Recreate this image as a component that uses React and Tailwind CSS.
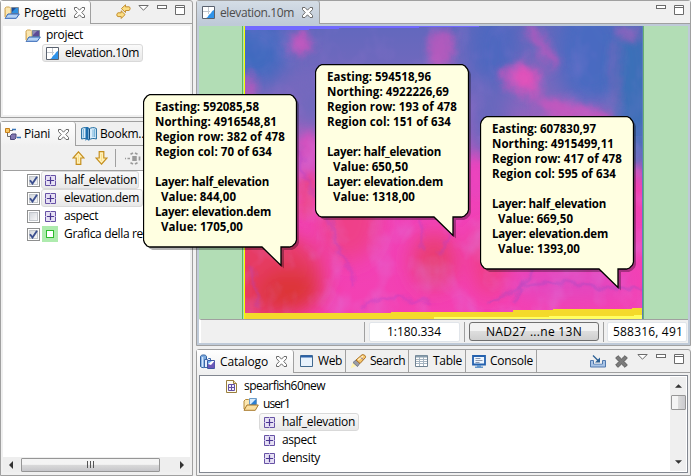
import { useLayoutEffect, useRef, useState } from "react";

/* Text whose tracking is adjusted so that the run takes exactly w pixels. */
function T({ w, children, className = "" }) {
  const ref = useRef(null);
  const [gap, setGap] = useState(0);
  useLayoutEffect(() => {
    const el = ref.current;
    const natural = el.getBoundingClientRect().width;
    const n = el.textContent.length;
    if (n > 0) setGap((w - natural) / n);
  }, [w]);
  return (
    <span
      ref={ref}
      className={"block w-max shrink-0 whitespace-pre " + className}
      style={{ letterSpacing: gap + "px" }}
    >
      {children}
    </span>
  );
}

function Close({ className = "" }) {
  return (
    <svg viewBox="0 0 11 11" className={"h-[11px] w-[11px] shrink-0 " + className}>
      <path
        d="M.5.5H3L5.500 3.200 8 .5h2.500v2L7.800 5.500l2.700 3v2H8L5.500 7.800 3 10.500H.5v-2l2.700-3L.5 2.500z"
        fill="#fff"
        stroke="#6b6b6b"
        strokeWidth="1"
      />
    </svg>
  );
}

function Triangle() {
  return (
    <svg viewBox="0 0 11 6" className="mt-1 h-[6px] w-[11px] shrink-0">
      <path d="M.8.5h9.400L5.500 5.200z" fill="#fff" stroke="#6b6b6b" />
    </svg>
  );
}

function MinMax() {
  return (
    <div className="flex gap-2">
      <div className="mt-1 h-1 w-[10px] border border-[#6b6b6b] bg-white" />
      <svg viewBox="0 0 10 10" className="mt-1 h-[10px] w-[10px] shrink-0">
        <path d="M.5.5h9v9h-9zM.5 2.500h9" fill="#fff" stroke="#6b6b6b" />
      </svg>
    </div>
  );
}

function ProjectIcon({ dark = false }) {
  return (
    <svg viewBox="0 0 16 13" className="h-[13px] w-4 shrink-0">
      <path d="M1 11V2l1.500-1h3L7 2.500V10z" fill="#fae6b0" stroke="#cfa656" />
      <path d="M7.500 1.500h7v6h-7z" fill={dark ? "#5b4a94" : "#2f8fdf"} stroke="#7b8798" />
      <path d="M8 2h4L8 6z" fill={dark ? "#8f86b4" : "#1c4c94"} />
      <path d="M1 12.300 4 8h11.300l-3 4.300z" fill="#b4d2f5" stroke="#2d62b4" />
      <path d="M1.500 11.500V4" stroke="#e0b96c" />
    </svg>
  );
}

function MapIcon() {
  return (
    <svg viewBox="0 0 13 13" className="h-[13px] w-[13px] shrink-0">
      <path d="M.5.5h12v12H.5z" fill="#fff" stroke="#59616e" />
      <path d="M1 5.500h7M6.500 1v7" stroke="#c3c8cf" />
      <path d="M4 12c2 0 2-3 4-4s1-3 4-4v8z" fill="#2f93ea" />
    </svg>
  );
}

function Grid() {
  return (
    <svg viewBox="0 0 11 11" className="h-[11px] w-[11px] shrink-0">
      <path d="M.5.5h10v10H.5z" fill="#e6e0f4" stroke="#6752a5" />
      <path d="M5.500 2v7M2 5.500h7" stroke="#4a3692" strokeWidth="1.200" />
      <path d="M5.500 0v1.500M5.500 9.500V11M0 5.500h1.500M9.500 5.500H11" stroke="#b3a6da" />
    </svg>
  );
}

function LinkIcon() {
  return (
    <svg viewBox="0 0 15 15" className="mt-[3px] h-[15px] w-[15px] shrink-0">
      <path d="M5.500 4.500 9.500.8v2H13c1.500 0 1.500 3.200 0 3.700H9.500v2L5.500 4.700z" fill="#fbdd83" stroke="#bd8420" strokeWidth=".9" />
      <path d="M9 10.500 5.200 6.800v2H2C.4 9.300.4 12.500 2 12.600h3.200v1.900L9 10.700z" fill="#fbdd83" stroke="#bd8420" strokeWidth=".9" />
    </svg>
  );
}

function LayersIcon() {
  return (
    <svg viewBox="0 0 16 12" className="h-3 w-4 shrink-0">
      <path d="M2.500 5v3.500H5M5 2.500h3" fill="none" stroke="#6b6b6b" />
      <path d="M.5.5h4v4h-4z" fill="#f8c866" stroke="#c57f1c" />
      <path d="M7 1.500h4M12 9.500h4" stroke="#3774b8" strokeWidth="1.500" />
      <path d="M5.500 7.500 7 6h4v4l-1.500 1.500h-4z" fill="#8177b0" stroke="#4b4678" />
    </svg>
  );
}

function BookIcon() {
  return (
    <svg viewBox="0 0 16 16" className="h-4 w-4 shrink-0">
      <path d="M.6 2.500C3 1 6 1.500 8 3c2-1.500 5-2 7.400-.5V13C12 12 10 12.500 8 14c-2-1.500-4-2-7.400-1z" fill="#d8ecfa" stroke="#1f6a9e" />
      <path d="M2.500 3v8.500M12 3.500V11M13.500 3v8" stroke="#7cb7dc" />
      <path d="M4.500 1h3v14L6 13l-1.500 2z" fill="#1d6fae" />
      <path d="M8.500 3v10" stroke="#174c7a" />
    </svg>
  );
}

function Arrow({ down = false }) {
  return (
    <svg viewBox="0 0 13 14" className={"h-[14px] w-[13px] shrink-0 " + (down ? "rotate-180" : "")}>
      <path d="M6.500.8 12 7H8.800v6.300H4.200V7H1z" fill="#fff0b8" stroke="#c58f1e" strokeWidth="1.200" />
      <path d="M6 4h1v7H6z" fill="#fbe08a" />
    </svg>
  );
}

function TargetIcon() {
  return (
    <svg viewBox="0 0 16 13" className="h-[13px] w-4 shrink-0">
      <path d="M5.500 2.200 8 .9M10 .9l2.500 1.300M5.500 10.800 8 12.100M10 12.100l2.500-1.300M14.500 4.500v4" stroke="#9a9a9a" strokeWidth="1.700" fill="none" />
      <path d="M0 6.500h1M2.500 6.500H5M8 4.800h3v3.400H8z" stroke="#9a9a9a" strokeWidth="1.500" fill="#9a9a9a" />
    </svg>
  );
}

function Check({ on }) {
  return (
    <div className="flex h-[13px] w-[13px] shrink-0 items-center justify-center border border-[#8e8f8f] bg-white">
      <div className="flex h-[9px] w-[9px] items-center justify-center border border-[#c3c7cc] bg-gradient-to-br from-[#d3d7dc] to-[#f8f8f8]">
        {on && (
          <svg viewBox="0 0 9 9" className="h-[9px] w-[9px] shrink-0">
            <path d="M1 4.200 3.500 7.500 8 .8" fill="none" stroke="#3c4f8f" strokeWidth="1.900" />
          </svg>
        )}
      </div>
    </div>
  );
}

function CatalogIcon() {
  return (
    <svg viewBox="0 0 16 16" className="h-4 w-4 shrink-0">
      <path d="M.5 2.500C1 .4 6 .4 6.500 2.500v10c-.5 1.500-5.500 1.500-6 0z" fill="#7aa8dd" stroke="#315f9e" />
      <path d="M2.500 3v10" stroke="#d4e6fa" strokeWidth="1.500" />
      <path d="M4.500 5.500h3l1-1h2v9h-6z" fill="#e7eefa" stroke="#3b67a8" />
      <path d="M7.500 6.500h7v8h-7z" fill="#fff" stroke="#3b57a3" />
      <path d="M8 14v-4l3 1 3.500-4v7z" fill="#6b58b8" />
      <path d="M8 7h4l-4 3z" fill="#6fb0ee" />
    </svg>
  );
}

function WebIcon() {
  return (
    <svg viewBox="0 0 13 12" className="h-3 w-[13px] shrink-0">
      <path d="M.5.5h12v11H.5z" fill="#e8f2fc" stroke="#41698f" />
      <path d="M1 1.500h11" stroke="#2a61a8" strokeWidth="2" />
    </svg>
  );
}

function SearchIcon() {
  return (
    <svg viewBox="0 0 17 15" className="h-[15px] w-[17px] shrink-0">
      <path d="M.5 14.500 3 8l4 3.500z" fill="#fff3b0" />
      <path d="M3 8.500 6 6l4 3-2.500 3.500z" fill="#9b9da6" stroke="#767a88" />
      <path d="M6 6 12 .8c2-.7 4 1 3.500 2.700L10 9.500z" fill="#f6c66b" stroke="#a86f25" />
      <path d="M8 6 13 2" stroke="#fff1c7" strokeWidth="1.500" />
      <path d="M11 3.500l2 2" stroke="#6d5cab" />
    </svg>
  );
}

function TableIcon() {
  return (
    <svg viewBox="0 0 13 12" className="h-3 w-[13px] shrink-0">
      <path d="M.5.5h12v11H.5z" fill="#fff" stroke="#718393" />
      <path d="M1 1.500h11" stroke="#879cac" strokeWidth="2" />
      <path d="M1 4.500h11M1 6.500h11M1 8.500h11M4.500 2v9M8.500 2v9" stroke="#a5b4c1" />
    </svg>
  );
}

function ConsoleIcon() {
  return (
    <svg viewBox="0 0 14 13" className="h-[13px] w-[14px] shrink-0">
      <path d="M1 1h12v8.500H1z" fill="#edf6ff" stroke="#2461ae" strokeWidth="1.800" />
      <path d="M3.500 3.500h5M3.500 5.500h7M3.500 7.500h4" stroke="#6e7d98" strokeWidth=".8" />
      <path d="M5 10h4v1.500h2V13H3v-1.500h2z" fill="#6396cb" />
    </svg>
  );
}

function ImportIcon() {
  return (
    <svg viewBox="0 0 16 13" className="mt-[5px] h-[13px] w-4 shrink-0">
      <path d="M3.500 5.500h-3v6.500h15V5.500h-3v3.500h-9z" fill="#a9c4e6" stroke="#5079ae" />
      <path d="M4 6h8v2.500H4z" fill="#f0f0f0" />
      <path d="M3 .5l5.500 5.500" fill="none" stroke="#2b5f93" strokeWidth="1.200" />
      <path d="M10 2.500v5H5z" fill="#2b5f93" />
    </svg>
  );
}

function DeleteIcon() {
  return (
    <svg viewBox="0 0 13 13" className="mt-[5px] h-[13px] w-[13px] shrink-0">
      <path d="M3 .7 6.500 4 10 .7 12.300 3 9 6.500l3.300 3.500L10 12.300 6.500 9 3 12.300.7 10 4 6.500.7 3z" fill="#7b7b7b" stroke="#5d5d5d" />
    </svg>
  );
}

function DatabaseIcon() {
  return (
    <svg viewBox="0 0 11 13" className="h-[13px] w-[11px] shrink-0">
      <path d="M.5.5h7l3 3v9H.5z" fill="#fffdf2" stroke="#9a7f3d" />
      <path d="M7.500.5v3h3" fill="#eeddb0" stroke="#9a7f3d" />
      <path d="M2.500 4.500h6v6h-6zM5.500 4.500v6M2.500 7.500h6" fill="#f0ecfb" stroke="#6250a4" />
    </svg>
  );
}

function FolderIcon() {
  return (
    <svg viewBox="0 0 16 13" className="h-[13px] w-4 shrink-0">
      <path d="M1 11V3l1.500-1.500h3L7 3v7z" fill="#fbe7b1" stroke="#b58a3a" />
      <path d="M6.500.5h7v6h-7z" fill="#d8ebfb" stroke="#6d9cc8" />
      <path d="M7 7l6-6v6z" fill="#2c7fd2" />
      <path d="M1 12.300 4 7h11.300l-3 5.300z" fill="#fbdf9f" stroke="#a8792b" />
    </svg>
  );
}

const picked = "rounded-[3px] border border-[#d9d9d9] bg-gradient-to-b from-[#fafafa] to-[#e8e8e8]";

function LayerRow({ on, selected, label, w, green, boxClass }) {
  return (
    <div className="flex h-[18px] items-center pl-6">
      <Check on={on} />
      <div className={"ml-px flex h-[18px] items-center " + boxClass + " " + (selected ? picked : "border border-transparent")}>
        {green ? (
          <div className="flex h-4 w-4 shrink-0 items-center justify-center bg-[#aeebae]">
            <div className="h-2 w-2 border border-[#2cbb2c] bg-white" />
          </div>
        ) : (
          <div className="flex w-4 shrink-0 justify-center"><Grid /></div>
        )}
        <T w={w} className="ml-[6px]">{label}</T>
      </div>
    </div>
  );
}

function CatalogRow({ label, w, selected }) {
  return (
    <div className="flex h-[18px] pl-[59px]">
      <div className={"flex h-[18px] items-center pl-1 pr-[3px] " + (selected ? picked : "border border-transparent")}>
        <Grid />
        <T w={w} className="ml-[7px]">{label}</T>
      </div>
    </div>
  );
}

function ElevationMap() {
  return (
    <svg viewBox="0 0 399 293" preserveAspectRatio="none" className="h-[293px] w-[399px] shrink-0">
      <defs>
        <linearGradient id="terrain" x1="0" y1="0" x2="0" y2="1">
          <stop offset="0" stopColor="#6268bd" />
          <stop offset=".22" stopColor="#7868be" />
          <stop offset=".36" stopColor="#a060c0" />
          <stop offset=".48" stopColor="#cf4fc0" />
          <stop offset=".6" stopColor="#f042b8" />
          <stop offset="1" stopColor="#f440b2" />
        </linearGradient>
        <filter id="soft" x="-50%" y="-50%" width="200%" height="200%"><feGaussianBlur stdDeviation="10" /></filter>
        <filter id="mid" x="-20%" y="-20%" width="140%" height="140%">
          <feGaussianBlur stdDeviation="5" result="b" />
          <feTurbulence type="fractalNoise" baseFrequency=".05" numOctaves="3" seed="4" result="n" />
          <feDisplacementMap in="b" in2="n" scale="14" xChannelSelector="R" yChannelSelector="G" />
        </filter>
        <filter id="fine" x="-20%" y="-20%" width="140%" height="140%">
          <feGaussianBlur stdDeviation="1.500" result="b" />
          <feTurbulence type="fractalNoise" baseFrequency=".08" numOctaves="2" seed="2" result="n" />
          <feDisplacementMap in="b" in2="n" scale="12" xChannelSelector="R" yChannelSelector="G" />
        </filter>
        <filter id="relief" x="0" y="0" width="100%" height="100%">
          <feTurbulence type="fractalNoise" baseFrequency=".04 .03" numOctaves="3" seed="8" />
          <feColorMatrix values="0 0 0 0 .68  0 0 0 0 .24  0 0 0 0 .8  2 0 0 0 -.9" />
        </filter>
      </defs>
      <rect width="399" height="293" fill="url(#terrain)" />
      <g filter="url(#soft)">
        <ellipse cx="10" cy="25" rx="34" ry="34" fill="#3f6abf" />
        <ellipse cx="250" cy="25" rx="24" ry="45" fill="#4d68c0" />
        <ellipse cx="345" cy="25" rx="32" ry="55" fill="#4a6ac1" />
        <ellipse cx="390" cy="65" rx="22" ry="85" fill="#3b70b8" />
        <ellipse cx="245" cy="92" rx="20" ry="40" fill="#6867bd" />
        <ellipse cx="85" cy="80" rx="40" ry="22" fill="#7069bd" />
        <ellipse cx="20" cy="250" rx="60" ry="45" fill="#e63b63" />
        <ellipse cx="45" cy="265" rx="32" ry="22" fill="#dd3538" />
        <ellipse cx="105" cy="190" rx="30" ry="45" fill="#ef4089" />
        <ellipse cx="190" cy="235" rx="22" ry="28" fill="#e93e72" />
        <ellipse cx="245" cy="235" rx="18" ry="35" fill="#f03c86" />
        <ellipse cx="325" cy="256" rx="60" ry="18" fill="#e346bf" />
      </g>
      <g filter="url(#mid)" fill="#d953bd">
        <ellipse cx="57" cy="17" rx="13" ry="13" opacity=".75" />
        <ellipse cx="197" cy="24" rx="12" ry="20" opacity=".65" />
        <ellipse cx="278" cy="52" rx="20" ry="18" opacity=".7" />
        <ellipse cx="280" cy="52" rx="10" ry="10" fill="#e44fb8" />
        <path d="M278 0l12 0 25 35-7 10-15-25zM285 67l45 8 38 13-5 12-55-4z" opacity=".7" />
        <path d="M370 0l12 15 15-6v-9z" opacity=".5" />
        <path d="M368 15h7v65h-7z" opacity=".3" />
        <ellipse cx="392" cy="168" rx="8" ry="28" fill="#f23fb1" />
        <ellipse cx="65" cy="130" rx="10" ry="25" fill="#d651bf" />
        <ellipse cx="235" cy="150" rx="8" ry="20" fill="#ee43bd" />
        <ellipse cx="3" cy="62" rx="10" ry="12" opacity=".6" />
        <ellipse cx="62" cy="170" rx="6" ry="25" fill="#ee427b" />
      </g>
      <rect y="110" width="399" height="183" filter="url(#relief)" opacity=".38" />
      <rect width="399" height="110" filter="url(#relief)" opacity=".15" />
      <g filter="url(#fine)" fill="none" stroke="#a93fcb" strokeWidth="2.200" opacity=".5">
        <path d="M54 124c10 12 0 20 12 38s20 26 24 48 25 30 18 50" />
        <path d="M176 195c5 8 5 20 2 30M208 205c-10 10-2 16-15 24" />
        <path d="M398 262c-45 3-75-9-105-5-20 3-28 8-48 20M270 278l8-20 19-20" stroke="#8c49c6" />
        <path d="M120 281c15-15 42-8 70-3" />
        <path d="M5 240c10 10 0 25 12 40" />
      </g>
      <path d="M0 0h235v1h-60v1H95v1H65v1H0z" fill="#7169ff" />
      <path d="M0 287h147v-1h122v-2h40v-1h79v-1h11v11H0z" fill="#f4da2b" />
      <path d="M190 291h115v-1h85v-1h9v4H190z" fill="#ffff62" />
      <path d="M.5 0v293" stroke="#f2ff00" />
      <path d="M398.500 0v293" stroke="#5b7fb8" />
    </svg>
  );
}

/* Speech balloon floating over the workbench. */
function Balloon({ className, lines }) {
  return (
    <div className={"absolute h-[176px] w-[158px] " + className}>
      <svg viewBox="0 0 158 176" className="absolute inset-0 h-[176px] w-[158px]">
        <path
          d="M7 .5h140l3 1.500 2.500 3 1 3v138l-1 3-3 3-3 1.500h-8v18.500l-19-18.500H7l-3-1.500-2.500-3-1-3V8l1-3L4 2z"
          fill="#000" opacity=".3" transform="translate(2.500 2.500)"
        />
        <path
          d="M7 .5h140l3 1.500 2.500 3 1 3v138l-1 3-3 3-3 1h-8.500v18.500l-19-18.500H7l-3-1-2.500-3-1-3V8l1-3L4 2z"
          fill="#ffffe1" stroke="#000" strokeWidth="1.300"
        />
      </svg>
      <div className="relative flex flex-col pl-3 pt-[5px] text-[11.5px] font-bold leading-[15px] text-black">
        {lines.map(([text, w], i) =>
          text ? (
            <T key={i} w={w} className={text.startsWith("Value") ? "ml-[6px]" : ""}>{text}</T>
          ) : (
            <div key={i} className="h-[15px]" />
          )
        )}
      </div>
    </div>
  );
}

export default function App() {
  return (
    <div className="relative flex h-[476px] w-[691px] gap-[3px] overflow-hidden bg-[#f0f0f0] font-['Open_Sans','Noto_Sans',sans-serif] text-[12px] leading-[16px] text-black">
      {/* left column */}
      <div className="flex w-[193px] shrink-0 flex-col gap-[3px]">
        <div className="flex h-[118px] flex-col rounded-t-[3px] border border-[#a0a0a0]">
          <div className="flex h-[23px] shrink-0">
            <div className="flex w-[90px] shrink-0 items-center rounded-tr-[3px] border-r border-[#a0a0a0] bg-gradient-to-b from-white to-[#f0f0f0] pl-[3px]">
              <ProjectIcon />
              <T w={42} className="ml-1">Progetti</T>
              <Close className="ml-2" />
            </div>
            <div className="flex flex-1 border-b border-[#a0a0a0] pl-[25px]">
              <LinkIcon />
              <div className="ml-[7px] flex gap-2">
                <Triangle />
                <MinMax />
              </div>
            </div>
          </div>
          <div className="mx-[2px] mb-[2px] mt-[2px] flex-1 bg-white">
            <div className="flex h-[18px] items-center pl-[22px]">
              <ProjectIcon dark />
              <T w={37} className="ml-[5px]">project</T>
            </div>
            <div className="flex pl-[39px]">
              <div className={"flex h-[18px] w-[101px] items-center pl-[3px] " + picked}>
                <MapIcon />
                <T w={74} className="ml-[6px]">elevation.10m</T>
              </div>
            </div>
          </div>
        </div>

        <div className="flex h-[355px] flex-col rounded-t-[3px] border border-[#a0a0a0]">
          <div className="flex h-[24px] shrink-0">
            <div className="flex w-[75px] shrink-0 items-center rounded-tr-[3px] border-r border-[#a0a0a0] bg-gradient-to-b from-white to-[#f0f0f0] pl-1">
              <LayersIcon />
              <T w={26} className="ml-[3px]">Piani</T>
              <Close className="ml-2" />
            </div>
            <div className="flex flex-1 items-center border-b border-[#a0a0a0] pl-[5px]">
              <BookIcon />
              <T w={47} className="ml-[3px]">Bookm...</T>
            </div>
          </div>
          <div className="flex h-[24px] shrink-0 items-center pl-[71px]">
            <Arrow />
            <div className="ml-[10px] flex"><Arrow down /></div>
            <div className="ml-[7px] h-[18px] w-px bg-[#a0a0a0]" />
            <div className="ml-[9px]"><TargetIcon /></div>
          </div>
          <div className="mx-[2px] flex flex-1 flex-col border-t border-[#a0a0a0] bg-white">
            <LayerRow on selected label="half_elevation" w={73} boxClass="w-[98px]" />
            <LayerRow on selected label="elevation.dem" w={75} boxClass="w-[102px]" />
            <LayerRow label="aspect" w={34} boxClass="w-[101px]" />
            <LayerRow on green label="Grafica della re" w={79} boxClass="w-[136px]" />
          </div>
          <div className="mx-[2px] mb-[3px] flex h-[15px] shrink-0 items-center bg-[#eeeeee]">
            <svg viewBox="0 0 4 8" className="ml-[6px] h-2 w-1"><path d="M4 0v8L0 4z" fill="#333" /></svg>
            <div className="ml-2 flex h-[14px] w-[139px] items-center justify-center gap-[2px] rounded-[1px] border border-[#969696] bg-gradient-to-b from-[#f4f4f4] from-45% via-[#dadada] via-50% to-[#c6c6ca]">
              <div className="h-[7px] w-px bg-[#555]" />
              <div className="h-[7px] w-px bg-[#555]" />
              <div className="h-[7px] w-px bg-[#555]" />
            </div>
            <svg viewBox="0 0 4 8" className="ml-5 h-2 w-1"><path d="M0 0v8l4-4z" fill="#333" /></svg>
          </div>
        </div>
      </div>

      {/* right column */}
      <div className="flex w-[495px] shrink-0 flex-col gap-[3px]">
        <div className="flex h-[346px] flex-col rounded-t-[3px] border border-[#a0a0a0] bg-[#bfcad8]">
          <div className="flex h-[23px] shrink-0">
            <div className="flex w-[123px] shrink-0 items-center rounded-tr-[3px] border-r border-[#a0a0a0] bg-gradient-to-b from-[#d4dde6] to-[#bfcad8] pl-[5px] text-[#4c4c4c]">
              <MapIcon />
              <T w={74} className="ml-[5px]">elevation.10m</T>
              <Close className="ml-2" />
            </div>
            <div className="flex flex-1 justify-end border-b border-[#a0a0a0] bg-[#f0f0f0] pr-[6px]">
              <MinMax />
            </div>
          </div>
          <div className="mx-[2px] mt-[2px] flex h-[293px] shrink-0 bg-[#b2ddb5]">
            <div className="mr-px w-[44px] shrink-0 border-r border-[#62b957]" />
            <ElevationMap />
            <div className="w-px bg-[#69af73]" />
          </div>
          <div className="mx-[2px] flex h-[24px] shrink-0 items-center overflow-hidden border-l-2 border-t border-[#fff] border-t-[#a0a0a0] bg-[#f0f0f0]">
            <div className="ml-[163px] h-[20px] w-px bg-[#a0a0a0]" />
            <div className="ml-1 flex h-[20px] w-[91px] items-center rounded-[2px] border border-[#e1e5ea] bg-white pl-[17px]">
              <T w={54}>1:180.334</T>
            </div>
            <div className="ml-[4px] h-[20px] w-px bg-[#a0a0a0]" />
            <div className="ml-1 flex h-[19px] w-[130px] items-center justify-center rounded-[3px] border border-[#707070] bg-gradient-to-b from-[#f2f2f2] from-45% via-[#dddddd] via-50% to-[#cfcfcf]">
              <T w={96}>NAD27 ...ne 13N</T>
            </div>
            <div className="ml-[4px] h-[20px] w-px bg-[#a0a0a0]" />
            <div className="ml-[3px] flex h-[20px] w-[80px] items-center rounded-[2px] border border-[#e1e5ea] bg-white pl-[5px]">
              <T w={70}>588316, 491</T>
            </div>
          </div>
        </div>

        <div className="flex h-[127px] flex-col rounded-t-[3px] border border-[#a0a0a0]">
          <div className="flex h-[23px] shrink-0">
            <div className="flex w-[97px] shrink-0 items-center rounded-tr-[3px] border-r border-[#a0a0a0] bg-gradient-to-b from-white to-[#f0f0f0] pl-[3px]">
              <CatalogIcon />
              <T w={48} className="ml-1">Catalogo</T>
              <Close className="ml-2" />
            </div>
            <div className="flex flex-1 border-b border-[#a0a0a0]">
              <div className="flex w-[52px] items-center border-r border-[#a0a0a0] pl-[6px]">
                <WebIcon />
                <T w={24} className="ml-[5px]">Web</T>
              </div>
              <div className="flex w-[63px] items-center border-r border-[#a0a0a0] pl-1">
                <SearchIcon />
                <T w={35} className="ml-[3px]">Search</T>
              </div>
              <div className="flex w-[57px] items-center border-r border-[#a0a0a0] pl-[6px]">
                <TableIcon />
                <T w={29} className="ml-[5px]">Table</T>
              </div>
              <div className="flex w-[71px] items-center border-r border-[#a0a0a0] pl-[6px]">
                <ConsoleIcon />
                <T w={43} className="ml-1">Console</T>
              </div>
              <div className="flex flex-1 justify-end pr-[6px]">
                <div className="mr-[9px]"><ImportIcon /></div>
                <div className="mr-[9px]"><DeleteIcon /></div>
                <div className="mr-[8px]"><Triangle /></div>
                <MinMax />
              </div>
            </div>
          </div>
          <div className="mx-[2px] mb-[2px] mt-[2px] flex flex-1 border border-[#828790] bg-white">
            <div className="flex flex-1 flex-col pt-[1px]">
              <div className="flex h-[18px] items-center pl-[26px]">
                <DatabaseIcon />
                <T w={81} className="ml-[7px]">spearfish60new</T>
              </div>
              <div className="flex h-[18px] items-center pl-[43px]">
                <FolderIcon />
                <T w={27} className="ml-1">user1</T>
              </div>
              <CatalogRow selected label="half_elevation" w={73} />
              <CatalogRow label="aspect" w={34} />
              <CatalogRow label="density" w={38} />
            </div>
            <div className="my-px mr-px flex w-4 flex-col items-center bg-[#efefef]">
              <svg viewBox="0 0 8 4" className="mt-[7px] h-1 w-[7px] shrink-0"><path d="M0 4h8L4 0z" fill="#333" /></svg>
              <div className="mt-[7px] h-[15px] w-[15px] shrink-0 rounded-[1px] border border-[#969696] bg-gradient-to-r from-[#f4f4f4] from-45% via-[#dadada] via-50% to-[#cacace]" />
              <svg viewBox="0 0 8 4" className="mb-[7px] mt-auto h-1 w-[7px] shrink-0"><path d="M0 0h8L4 4z" fill="#333" /></svg>
            </div>
          </div>
        </div>
      </div>

      <Balloon
        className="left-[143px] top-[94px]"
        lines={[
          ["Easting: 592085,58", 104],
          ["Northing: 4916548,81", 122],
          ["Region row: 382 of 478", 130],
          ["Region col: 70 of 634", 117],
          ["", 0],
          ["Layer: half_elevation", 114],
          ["Value: 844,00", 75],
          ["Layer: elevation.dem", 116],
          ["Value: 1705,00", 82],
        ]}
      />
      <Balloon
        className="left-[315px] top-[64px]"
        lines={[
          ["Easting: 594518,96", 104],
          ["Northing: 4922226,69", 122],
          ["Region row: 193 of 478", 130],
          ["Region col: 151 of 634", 124],
          ["", 0],
          ["Layer: half_elevation", 114],
          ["Value: 650,50", 75],
          ["Layer: elevation.dem", 116],
          ["Value: 1318,00", 82],
        ]}
      />
      <Balloon
        className="left-[480px] top-[116px]"
        lines={[
          ["Easting: 607830,97", 104],
          ["Northing: 4915499,11", 122],
          ["Region row: 417 of 478", 130],
          ["Region col: 595 of 634", 124],
          ["", 0],
          ["Layer: half_elevation", 114],
          ["Value: 669,50", 75],
          ["Layer: elevation.dem", 116],
          ["Value: 1393,00", 82],
        ]}
      />
    </div>
  );
}
